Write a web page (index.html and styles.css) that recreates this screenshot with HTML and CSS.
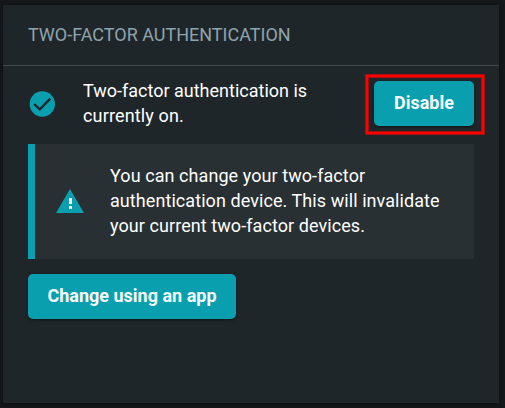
FILE: index.html
```
<!DOCTYPE html>
<html lang="en">
<head>
<meta charset="utf-8">
<title>Two-factor authentication</title>
<link rel="stylesheet" href="styles.css">
</head>
<body>
<section class="card">
  <header class="card-header"><h2 class="title">TWO-FACTOR AUTHENTICATION</h2></header>
  <div class="status">
    <svg class="check" viewBox="0 0 26 26"><circle cx="13.3" cy="13" r="12.7" fill="#0a9fae"/><path d="M5.2 13l5.6 5.4L21.3 7.6" fill="none" stroke="#1f2629" stroke-width="2.3"/></svg>
    <p class="text status-text">Two-factor authentication is<br><span class="on">currently on.</span></p>
    <button class="button disable">Disable</button>
  </div>
  <div class="callout">
    <svg class="warning" viewBox="0 0 28 24"><path d="M14 0L28 24H0Z" fill="#0a9fae"/><path d="M13 9h3v6h-3zM13 17h3v3h-3z" fill="#f4f8f8"/></svg>
    <p class="text">You can change your two-factor<br>authentication device. This will invalidate<br>your current two-factor devices.</p>
  </div>
  <button class="button change">Change using an app</button>
</section>
</body>
</html>
```
FILE: styles.css
```
* { box-sizing: border-box; }
body {
  margin: 0;
  height: 408px;
  padding: 5px 6px 5px 3px;
  background: #14181b;
  font-family: Roboto, "Liberation Sans", sans-serif;
  overflow: hidden;
}
.card {
  height: 398px;
  background: #1f2629;
  box-shadow: 0 1px 4px rgba(0, 0, 0, .45);
}
.card-header {
  height: 61px;
  padding: 17px 25px 0;
  border-bottom: 1px solid #41484a;
}
.title {
  margin: 0;
  font-size: 18px;
  line-height: 26px;
  font-weight: 400;
  color: #8fa3ad;
  white-space: nowrap;
}
.status {
  display: flex;
  height: 78px;
  padding: 15px 25px 0 26px;
}
.check { flex: none; width: 26px; height: 26px; margin-top: 10px; }
.text {
  margin: 0;
  font-size: 18px;
  line-height: 25px;
  color: #fff;
  white-space: nowrap;
}
.status-text { margin: -3px 0 0 28px; }
.on { letter-spacing: .15px; }
.button {
  height: 45px;
  padding: 0 0 1px;
  border: 0;
  border-radius: 5px;
  background: #0a9fae;
  box-shadow: 0 1px 3px rgba(0, 0, 0, .5);
  color: #f6fbfb;
  font: 700 18px/44px Roboto, "Liberation Sans", sans-serif;
  white-space: nowrap;
}
.disable {
  width: 100px;
  margin-left: auto;
  position: relative;
}
.disable::after {
  content: "";
  position: absolute;
  inset: -6px -10px -8px -8px;
  border: 2px solid #f00;
  box-shadow: 0 0 0 1px rgba(255, 0, 0, .6), inset 0 0 0 1px rgba(255, 0, 0, .6);
}
.callout {
  display: flex;
  align-items: center;
  height: 115px;
  margin: 0 25px 15px;
  border-left: 7px solid #0a9fae;
  background: #293033;
}
.callout .text { margin: -2px 0 0 26px; letter-spacing: .07px; }
.warning { flex: none; width: 28px; height: 24px; margin: -2px 0 0 21px; }
.change { display: block; width: 208px; margin-left: 25px; }
```
